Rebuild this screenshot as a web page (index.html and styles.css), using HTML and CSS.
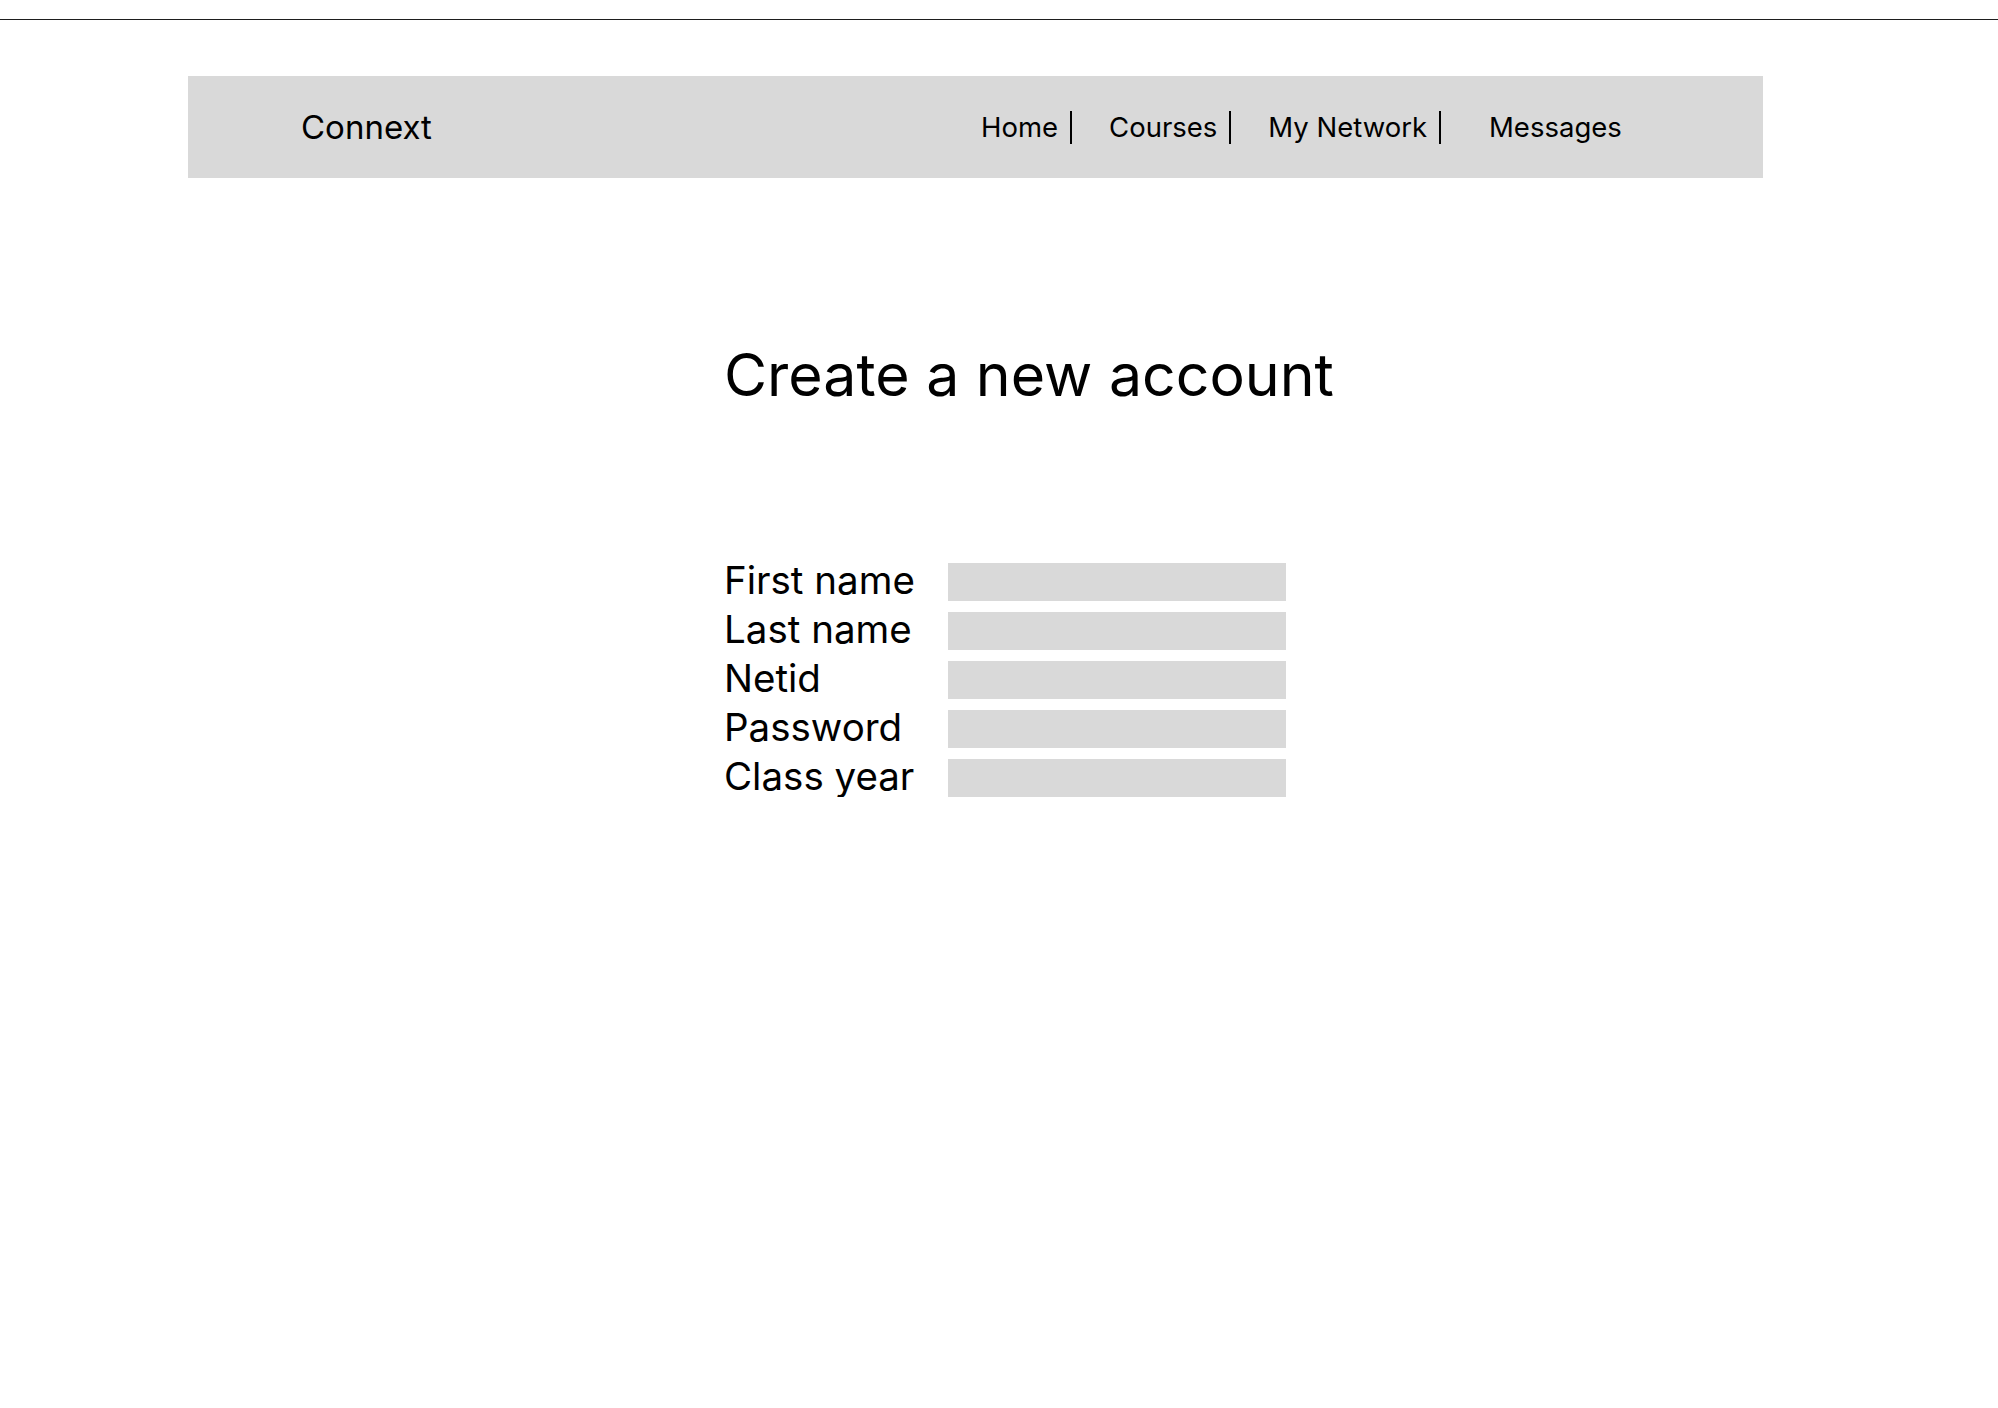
FILE: index.html
```html
<!DOCTYPE html>
<html lang="en">
<head>
<meta charset="utf-8">
<title>Connext - Create a new account</title>
<link rel="stylesheet" href="styles.css">
</head>
<body>
<div class="topline"></div>
<header class="nav">
  <div class="brand">Connext</div>
  <nav class="links">
    <a class="link sep" href="#">Home</a>
    <a class="link sep" href="#">Courses</a>
    <a class="link sep wide" href="#">My Network</a>
    <a class="link" href="#">Messages</a>
  </nav>
</header>
<main class="main">
  <h1 class="title">Create a new account</h1>
  <form class="form">
    <label class="label" for="first">First name</label><input class="field" id="first" type="text">
    <label class="label" for="last">Last name</label><input class="field" id="last" type="text">
    <label class="label" for="netid">Netid</label><input class="field" id="netid" type="text">
    <label class="label" for="pw">Password</label><input class="field" id="pw" type="password">
    <label class="label" for="year">Class year</label><input class="field" id="year" type="text">
  </form>
</main>
</body>
</html>
```
FILE: styles.css
```css
html, body {
  margin: 0;
  padding: 0;
  background: #ffffff;
}
body {
  font-family: Inter, "Noto Sans", sans-serif;
  color: #000;
}
.topline {
  margin-top: 19px;
  height: 1px;
  background: #1e1e1e;
}
.nav {
  margin: 56px 235px 0 188px;
  height: 102px;
  background: #d9d9d9;
  display: flex;
  align-items: center;
  padding-left: 113px;
  box-sizing: border-box;
}
.brand {
  font-size: 33px;
  line-height: 40px;
  width: 680px;
}
.links {
  display: flex;
  align-items: center;
}
.link {
  color: #000;
  text-decoration: none;
  font-size: 27.5px;
  line-height: 33px;
}
.sep {
  padding-right: 12px;
  border-right: 2px solid #000;
  margin-right: 37px;
}
.sep.wide {
  margin-right: 48px;
}
.main {
  padding-left: 724px;
  padding-top: 161px;
}
.title {
  margin: 0;
  font-size: 59px;
  font-weight: 400;
  line-height: 72px;
}
.form {
  margin-top: 152px;
  display: grid;
  grid-template-columns: 224px 338px;
  grid-auto-rows: 38px;
  row-gap: 11px;
  align-items: center;
}
.label {
  font-size: 38.5px;
  line-height: 38px;
  margin-bottom: 5px;
  white-space: nowrap;
}
.field {
  height: 38px;
  width: 338px;
  box-sizing: border-box;
  border: 0;
  margin: 0;
  padding: 0;
  background: #d9d9d9;
  outline: none;
}
```
